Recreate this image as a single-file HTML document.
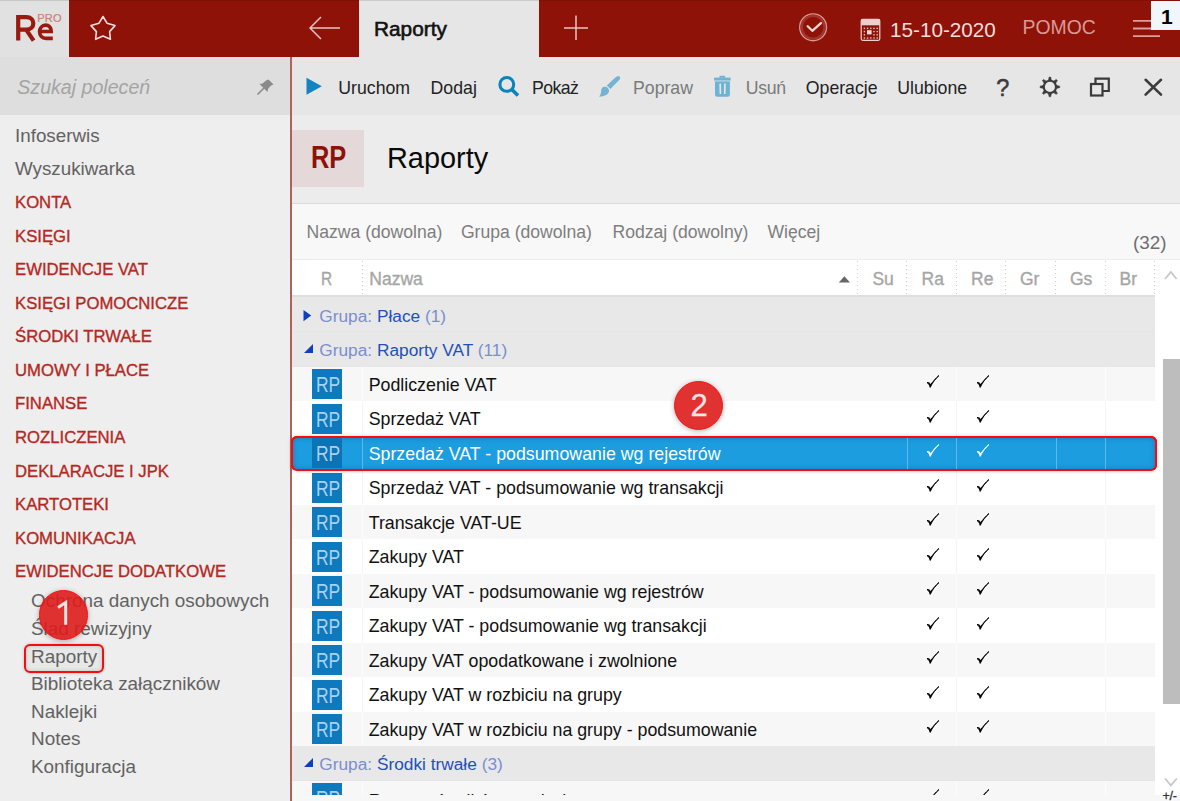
<!DOCTYPE html>
<html><head><meta charset="utf-8"><style>
html,body{margin:0;padding:0;}
body{width:1180px;height:801px;overflow:hidden;position:relative;font-family:"Liberation Sans",sans-serif;background:#eee;}
.b{position:absolute;}
.t{position:absolute;white-space:nowrap;}
</style></head><body>
<div class="b" style="left:0px;top:0px;width:1180px;height:801px;background:#eeeeee;"></div>
<div class="b" style="left:69px;top:0px;width:1111px;height:57px;background:#8e1207;"></div>
<div class="b" style="left:0px;top:0px;width:69px;height:57px;background:#e1e1e1;"></div>
<div class="b" style="left:359px;top:0px;width:180px;height:57px;background:#e6e6e6;"></div>
<div class="b" style="left:0px;top:0px;width:1180px;height:1px;background:rgba(0,0,0,0.11);"></div>
<div class="b" style="left:0px;top:57px;width:290px;height:58px;background:#dedede;"></div>
<div class="b" style="left:292px;top:57px;width:888px;height:58px;background:#e6e6e6;"></div>
<div class="b" style="left:292px;top:115px;width:888px;height:88px;background:#ececec;"></div>
<div class="b" style="left:292px;top:203px;width:888px;height:1px;background:#dadada;"></div>
<div class="b" style="left:292px;top:204px;width:888px;height:55px;background:#f8f8f8;"></div>
<div class="b" style="left:292px;top:259px;width:888px;height:1px;background:#ececec;"></div>
<div class="b" style="left:292px;top:260px;width:888px;height:35px;background:#ffffff;"></div>
<div class="b" style="left:292px;top:295px;width:863px;height:2px;background:#dedede;"></div>
<div class="b" style="left:1155px;top:294px;width:25px;height:507px;background:#ffffff;"></div>
<div class="b" style="left:290px;top:57px;width:2px;height:744px;background:#b0625a;"></div>
<svg class="b" style="left:10px;top:10px" width="50" height="34" viewBox="10 10 50 34"><path d="M18.2,40.6 V17.2 H26.3 C30.9,17.2 33.3,19.9 33.3,23.4 C33.3,26.9 30.9,29.6 26.3,29.6 H18.2 M26,29.4 L33.6,40.6" stroke="#9a1a10" stroke-width="4.2" fill="none"/><path d="M39.6,31.5 H51.2 C51.2,27.4 48.8,25.2 45.6,25.2 C42,25.2 39.6,28.2 39.6,31.8 C39.6,35.7 42.2,38.4 46,38.4 H52.8" stroke="#9a1a10" stroke-width="3.7" fill="none"/></svg>
<div class="t " style="left:37.3px;top:12.68px;font-size:11px;line-height:11px;color:#c98078;font-weight:normal;font-style:normal;letter-spacing:0.2px;-webkit-text-stroke:0.2px #c98078;">PRO</div>
<svg class="b" style="left:88px;top:14px" width="30" height="28" viewBox="88 14 30 28"><polygon points="103,16.5 107,23.2 115,25.6 109.6,31.6 110.4,39.3 103,36.1 95.6,39.3 96.4,31.6 91,25.6 99,23.2" fill="none" stroke="#f2dcdc" stroke-width="1.6" stroke-linejoin="round"/></svg>
<svg class="b" style="left:305px;top:12px" width="40" height="32" viewBox="305 12 40 32"><path d="M310,28 H340 M321,17 L310,28 L321,39" fill="none" stroke="#e8c4c0" stroke-width="1.5"/></svg>
<div class="t " style="left:374px;top:18.68px;font-size:20.8px;line-height:20.8px;color:#111;font-weight:normal;font-style:normal;-webkit-text-stroke:0.6px #111;">Raporty</div>
<svg class="b" style="left:560px;top:12px" width="32" height="32" viewBox="560 12 32 32"><path d="M576,15.5 V40 M564,28 H588" fill="none" stroke="#e8c4c0" stroke-width="1.5"/></svg>
<svg class="b" style="left:796px;top:10px" width="34" height="34" viewBox="796 10 34 34"><circle cx="813.1" cy="27.3" r="13.4" fill="none" stroke="#d69894" stroke-width="1.4"/><circle cx="813.1" cy="27.3" r="11.4" fill="none" stroke="#a2352e" stroke-width="2.2"/><path d="M807.7,26.3 L812.3,30.8 L820.9,23.1" fill="none" stroke="#f0d6d4" stroke-width="2.3" stroke-linecap="round" stroke-linejoin="round"/></svg>
<svg class="b" style="left:858px;top:17px" width="26" height="26" viewBox="858 17 26 26"><rect x="861.2" y="19.3" width="18.6" height="21" rx="1.5" fill="none" stroke="#ecd0d0" stroke-width="1.2"/><rect x="861.2" y="19.3" width="18.6" height="6" fill="#ecd0d0"/><rect x="863.7" y="27.7" width="1.4" height="1.4" fill="#e8c4c4"/><rect x="866.9000000000001" y="27.7" width="1.4" height="1.4" fill="#e8c4c4"/><rect x="870.1" y="27.7" width="1.4" height="1.4" fill="#e8c4c4"/><rect x="873.3000000000001" y="27.7" width="1.4" height="1.4" fill="#e8c4c4"/><rect x="876.5" y="27.7" width="1.4" height="1.4" fill="#e8c4c4"/><rect x="863.7" y="30.9" width="1.4" height="1.4" fill="#e8c4c4"/><rect x="873.3000000000001" y="30.9" width="1.4" height="1.4" fill="#e8c4c4"/><rect x="876.5" y="30.9" width="1.4" height="1.4" fill="#e8c4c4"/><rect x="863.7" y="34.1" width="1.4" height="1.4" fill="#e8c4c4"/><rect x="873.3000000000001" y="34.1" width="1.4" height="1.4" fill="#e8c4c4"/><rect x="876.5" y="34.1" width="1.4" height="1.4" fill="#e8c4c4"/><rect x="863.7" y="37.3" width="1.4" height="1.4" fill="#e8c4c4"/><rect x="866.9000000000001" y="37.3" width="1.4" height="1.4" fill="#e8c4c4"/><rect x="870.1" y="37.3" width="1.4" height="1.4" fill="#e8c4c4"/><rect x="873.3000000000001" y="37.3" width="1.4" height="1.4" fill="#e8c4c4"/><rect x="876.5" y="37.3" width="1.4" height="1.4" fill="#e8c4c4"/><rect x="867" y="30.2" width="4.6" height="4.2" fill="#f2dcdc"/></svg>
<div class="t " style="left:890px;top:19.01px;font-size:21px;line-height:21px;color:#f3dede;font-weight:normal;font-style:normal;transform:scaleX(0.985);transform-origin:0 0;">15-10-2020</div>
<div class="t " style="left:1022.5px;top:17.77px;font-size:19.4px;line-height:19.4px;color:#d99a96;font-weight:normal;font-style:normal;">POMOC</div>
<svg class="b" style="left:1130px;top:15px" width="34" height="26" viewBox="1130 15 34 26"><path d="M1133,20.8 H1160 M1133,28.5 H1160 M1133,36.1 H1160" fill="none" stroke="#d9a09c" stroke-width="1.8"/></svg>
<div class="b" style="left:1150.5px;top:0.5px;width:29.5px;height:29.5px;background:#f0f6fa;"></div>
<div class="t " style="left:1161px;top:5.51px;font-size:21px;line-height:21px;color:#000;font-weight:bold;font-style:normal;">1</div>
<div class="t " style="left:17.3px;top:77.80px;font-size:19.6px;line-height:19.6px;color:#a4a4a4;font-weight:normal;font-style:italic;">Szukaj poleceń</div>
<svg class="b" style="left:254px;top:76px" width="24" height="22" viewBox="254 76 24 22"><path d="M257.5,94.5 L264,88" stroke="#8a8a8a" stroke-width="1.6"/><path d="M268.5,79.5 L273.5,84.5 L271,85.5 L268,89 L267.5,92 L259.5,84 L262.5,83.5 L266,80.5 Z" fill="#8a8a8a"/></svg>
<div class="t " style="left:15px;top:126.88px;font-size:18.8px;line-height:18.8px;color:#626262;font-weight:normal;font-style:normal;">Infoserwis</div>
<div class="t " style="left:15px;top:160.18px;font-size:18.8px;line-height:18.8px;color:#626262;font-weight:normal;font-style:normal;">Wyszukiwarka</div>
<div class="t " style="left:15px;top:194.96px;font-size:16.7px;line-height:16.7px;color:#b5281f;font-weight:normal;font-style:normal;-webkit-text-stroke:0.35px #b5281f;">KONTA</div>
<div class="t " style="left:15px;top:228.53px;font-size:16.7px;line-height:16.7px;color:#b5281f;font-weight:normal;font-style:normal;-webkit-text-stroke:0.35px #b5281f;">KSIĘGI</div>
<div class="t " style="left:15px;top:262.10px;font-size:16.7px;line-height:16.7px;color:#b5281f;font-weight:normal;font-style:normal;-webkit-text-stroke:0.35px #b5281f;">EWIDENCJE VAT</div>
<div class="t " style="left:15px;top:295.67px;font-size:16.7px;line-height:16.7px;color:#b5281f;font-weight:normal;font-style:normal;-webkit-text-stroke:0.35px #b5281f;">KSIĘGI POMOCNICZE</div>
<div class="t " style="left:15px;top:329.24px;font-size:16.7px;line-height:16.7px;color:#b5281f;font-weight:normal;font-style:normal;-webkit-text-stroke:0.35px #b5281f;">ŚRODKI TRWAŁE</div>
<div class="t " style="left:15px;top:362.81px;font-size:16.7px;line-height:16.7px;color:#b5281f;font-weight:normal;font-style:normal;-webkit-text-stroke:0.35px #b5281f;">UMOWY I PŁACE</div>
<div class="t " style="left:15px;top:396.38px;font-size:16.7px;line-height:16.7px;color:#b5281f;font-weight:normal;font-style:normal;-webkit-text-stroke:0.35px #b5281f;">FINANSE</div>
<div class="t " style="left:15px;top:429.95px;font-size:16.7px;line-height:16.7px;color:#b5281f;font-weight:normal;font-style:normal;-webkit-text-stroke:0.35px #b5281f;">ROZLICZENIA</div>
<div class="t " style="left:15px;top:463.52px;font-size:16.7px;line-height:16.7px;color:#b5281f;font-weight:normal;font-style:normal;-webkit-text-stroke:0.35px #b5281f;">DEKLARACJE I JPK</div>
<div class="t " style="left:15px;top:497.09px;font-size:16.7px;line-height:16.7px;color:#b5281f;font-weight:normal;font-style:normal;-webkit-text-stroke:0.35px #b5281f;">KARTOTEKI</div>
<div class="t " style="left:15px;top:530.66px;font-size:16.7px;line-height:16.7px;color:#b5281f;font-weight:normal;font-style:normal;-webkit-text-stroke:0.35px #b5281f;">KOMUNIKACJA</div>
<div class="t " style="left:15px;top:564.23px;font-size:16.7px;line-height:16.7px;color:#b5281f;font-weight:normal;font-style:normal;-webkit-text-stroke:0.35px #b5281f;">EWIDENCJE DODATKOWE</div>
<div class="b" style="left:23.7px;top:643.5px;width:76.3px;height:25px;border:2px solid #f50c0c;border-radius:6px;background:#e8e8e8;box-shadow:0 0 3px rgba(0,0,0,0.22), inset 0 0 4px rgba(0,0,0,0.18)"></div>
<div class="t " style="left:31px;top:592.39px;font-size:18.9px;line-height:18.9px;color:#626262;font-weight:normal;font-style:normal;">Ochrona danych osobowych</div>
<div class="t " style="left:31px;top:619.99px;font-size:18.9px;line-height:18.9px;color:#626262;font-weight:normal;font-style:normal;">Ślad rewizyjny</div>
<div class="t " style="left:31px;top:647.59px;font-size:18.9px;line-height:18.9px;color:#626262;font-weight:normal;font-style:normal;">Raporty</div>
<div class="t " style="left:31px;top:675.19px;font-size:18.9px;line-height:18.9px;color:#626262;font-weight:normal;font-style:normal;">Biblioteka załączników</div>
<div class="t " style="left:31px;top:702.79px;font-size:18.9px;line-height:18.9px;color:#626262;font-weight:normal;font-style:normal;">Naklejki</div>
<div class="t " style="left:31px;top:730.39px;font-size:18.9px;line-height:18.9px;color:#626262;font-weight:normal;font-style:normal;">Notes</div>
<div class="t " style="left:31px;top:757.99px;font-size:18.9px;line-height:18.9px;color:#626262;font-weight:normal;font-style:normal;">Konfiguracja</div>
<svg class="b" style="left:304px;top:75px" width="20" height="22" viewBox="304 75 20 22"><polygon points="306.5,77.8 321.8,86.3 306.5,94.8" fill="#1284c0"/></svg>
<div class="t " style="left:338.3px;top:79.61px;font-size:17.7px;line-height:17.7px;color:#222222;font-weight:normal;font-style:normal;">Uruchom</div>
<div class="t " style="left:430.6px;top:79.61px;font-size:17.7px;line-height:17.7px;color:#222222;font-weight:normal;font-style:normal;">Dodaj</div>
<svg class="b" style="left:494px;top:72px" width="30" height="28" viewBox="494 72 30 28"><circle cx="506.8" cy="84.4" r="6.9" fill="none" stroke="#0a84bc" stroke-width="3.1"/><path d="M511.8,89.4 L518,95.6" stroke="#0a84bc" stroke-width="3.6"/></svg>
<div class="t " style="left:532px;top:79.61px;font-size:17.7px;line-height:17.7px;color:#222222;font-weight:normal;font-style:normal;letter-spacing:-0.6px;">Pokaż</div>
<svg class="b" style="left:594px;top:72px" width="32" height="28" viewBox="594 72 32 28"><path d="M619.6,76.6 C620.6,77.6 620.2,79 619.2,80 L610.4,89 L606.8,85.5 L615.4,77.6 C617,76.3 618.6,75.8 619.6,76.6 Z" fill="#74b4d2"/><path d="M604.5,86.8 C607.5,86.6 609.4,89 609,91.5 C608.5,94.5 604,96.5 599.2,96.7 C600.5,95 601,93 601.2,90.5 C601.3,88.3 602.6,86.9 604.5,86.8 Z" fill="#74b4d2"/></svg>
<div class="t " style="left:633px;top:79.61px;font-size:17.7px;line-height:17.7px;color:#7a7a7a;font-weight:normal;font-style:normal;">Popraw</div>
<svg class="b" style="left:708px;top:72px" width="28" height="28" viewBox="708 72 28 28"><rect x="714.1" y="77.6" width="16.5" height="3" fill="#6db3d3"/><rect x="719.5" y="75.8" width="5.6" height="2" fill="#6db3d3"/><rect x="714.5" y="80.6" width="15.6" height="0.9" fill="#a8cfe0"/><path d="M715,81.5 H729.9 V94.6 Q729.9,96.8 727.7,96.8 H717.2 Q715,96.8 715,94.6 Z" fill="#6db3d3"/><path d="M719.3,83.6 H721 L721.2,94 H719.6 Z M724.1,83.6 H725.8 L725.5,94 H723.9 Z" fill="#e6e6e6"/></svg>
<div class="t " style="left:745.8px;top:79.61px;font-size:17.7px;line-height:17.7px;color:#7a7a7a;font-weight:normal;font-style:normal;letter-spacing:-0.3px;">Usuń</div>
<div class="t " style="left:805.8px;top:79.61px;font-size:17.7px;line-height:17.7px;color:#222222;font-weight:normal;font-style:normal;">Operacje</div>
<div class="t " style="left:897.3px;top:79.61px;font-size:17.7px;line-height:17.7px;color:#222222;font-weight:normal;font-style:normal;">Ulubione</div>
<div class="t " style="left:996.3px;top:76.90px;font-size:23.5px;line-height:23.5px;color:#3c3c3c;font-weight:normal;font-style:normal;-webkit-text-stroke:0.5px #3c3c3c;">?</div>
<svg class="b" style="left:1036px;top:73px" width="28" height="28" viewBox="1036 73 28 28"><path d="M1051.50,80.90 L1050.65,77.10 L1049.15,77.10 L1048.30,80.90 Z M1055.27,83.79 L1057.36,80.50 L1056.30,79.44 L1053.01,81.53 Z M1055.90,88.50 L1059.70,87.65 L1059.70,86.15 L1055.90,85.30 Z M1053.01,92.27 L1056.30,94.36 L1057.36,93.30 L1055.27,90.01 Z M1048.30,92.90 L1049.15,96.70 L1050.65,96.70 L1051.50,92.90 Z M1044.53,90.01 L1042.44,93.30 L1043.50,94.36 L1046.79,92.27 Z M1043.90,85.30 L1040.10,86.15 L1040.10,87.65 L1043.90,88.50 Z M1046.79,81.53 L1043.50,79.44 L1042.44,80.50 L1044.53,83.79 Z" fill="#3c3c3c" stroke="#3c3c3c" stroke-width="0.6" stroke-linejoin="round"/><circle cx="1049.9" cy="86.9" r="6.1" fill="none" stroke="#3c3c3c" stroke-width="2.1"/></svg>
<svg class="b" style="left:1086px;top:74px" width="28" height="26" viewBox="1086 74 28 26"><rect x="1091" y="84" width="11.5" height="11.5" fill="none" stroke="#3a3a3a" stroke-width="2.2"/><path d="M1095.5,84 V78.6 H1108.8 V91 H1102.5" fill="none" stroke="#3a3a3a" stroke-width="2.2"/></svg>
<svg class="b" style="left:1141px;top:75px" width="25" height="24" viewBox="1141 75 25 24"><path d="M1145.6,79.8 L1161,94.6 M1161,79.8 L1145.6,94.6" stroke="#3c3c3c" stroke-width="2.6" stroke-linecap="round"/></svg>
<div class="b" style="left:292px;top:130px;width:72px;height:57px;background:#e4d8d8;"></div>
<div class="t " style="left:311.4px;top:142.34px;font-size:31px;line-height:31px;color:#8e1207;font-weight:bold;font-style:normal;transform:scaleX(0.82);transform-origin:0 0;">RP</div>
<div class="t " style="left:387px;top:144.12px;font-size:28.9px;line-height:28.9px;color:#0a0a0a;font-weight:normal;font-style:normal;">Raporty</div>
<div class="t " style="left:306.5px;top:223.59px;font-size:17.6px;line-height:17.6px;color:#7e7e7e;font-weight:normal;font-style:normal;">Nazwa (dowolna)</div>
<div class="t " style="left:460.9px;top:223.59px;font-size:17.6px;line-height:17.6px;color:#7e7e7e;font-weight:normal;font-style:normal;">Grupa (dowolna)</div>
<div class="t " style="left:612.5px;top:223.59px;font-size:17.6px;line-height:17.6px;color:#7e7e7e;font-weight:normal;font-style:normal;">Rodzaj (dowolny)</div>
<div class="t " style="left:767.4px;top:223.59px;font-size:17.6px;line-height:17.6px;color:#7e7e7e;font-weight:normal;font-style:normal;">Więcej</div>
<div class="t " style="right:13.5px;top:234.09px;font-size:18.9px;line-height:18.9px;color:#6e6e6e;font-weight:normal;font-style:normal;">(32)</div>
<div class="t " style="left:321.3px;top:270.78px;font-size:17.5px;line-height:17.5px;color:#a6a6a6;font-weight:normal;font-style:normal;transform:scaleX(0.88);transform-origin:0 0;-webkit-text-stroke:0.35px #a6a6a6;">R</div>
<div class="t " style="left:369.3px;top:270.78px;font-size:17.5px;line-height:17.5px;color:#a6a6a6;font-weight:normal;font-style:normal;-webkit-text-stroke:0.35px #a6a6a6;">Nazwa</div>
<svg class="b" style="left:836px;top:274px" width="16" height="10" viewBox="836 274 16 10"><polygon points="838.8,282.6 844.4,276.3 850,282.6" fill="#666"/></svg>
<div class="b" style="left:361.5px;top:261px;width:1px;height:36px;background:repeating-linear-gradient(to bottom,#cdcdcd 0px,#cdcdcd 1.5px,transparent 1.5px,transparent 4px)"></div>
<div class="b" style="left:857.1px;top:261px;width:1px;height:36px;background:repeating-linear-gradient(to bottom,#cdcdcd 0px,#cdcdcd 1.5px,transparent 1.5px,transparent 4px)"></div>
<div class="b" style="left:906.3px;top:261px;width:1px;height:36px;background:repeating-linear-gradient(to bottom,#cdcdcd 0px,#cdcdcd 1.5px,transparent 1.5px,transparent 4px)"></div>
<div class="b" style="left:955.8px;top:261px;width:1px;height:36px;background:repeating-linear-gradient(to bottom,#cdcdcd 0px,#cdcdcd 1.5px,transparent 1.5px,transparent 4px)"></div>
<div class="b" style="left:1005.3px;top:261px;width:1px;height:36px;background:repeating-linear-gradient(to bottom,#cdcdcd 0px,#cdcdcd 1.5px,transparent 1.5px,transparent 4px)"></div>
<div class="b" style="left:1055.0px;top:261px;width:1px;height:36px;background:repeating-linear-gradient(to bottom,#cdcdcd 0px,#cdcdcd 1.5px,transparent 1.5px,transparent 4px)"></div>
<div class="b" style="left:1104.5px;top:261px;width:1px;height:36px;background:repeating-linear-gradient(to bottom,#cdcdcd 0px,#cdcdcd 1.5px,transparent 1.5px,transparent 4px)"></div>
<div class="b" style="left:1154.3px;top:261px;width:1px;height:36px;background:repeating-linear-gradient(to bottom,#cdcdcd 0px,#cdcdcd 1.5px,transparent 1.5px,transparent 4px)"></div>
<div class="t " style="left:872.4px;top:270.78px;font-size:17.5px;line-height:17.5px;color:#a6a6a6;font-weight:normal;font-style:normal;-webkit-text-stroke:0.35px #a6a6a6;">Su</div>
<div class="t " style="left:921.5px;top:270.78px;font-size:17.5px;line-height:17.5px;color:#a6a6a6;font-weight:normal;font-style:normal;-webkit-text-stroke:0.35px #a6a6a6;">Ra</div>
<div class="t " style="left:971px;top:270.78px;font-size:17.5px;line-height:17.5px;color:#a6a6a6;font-weight:normal;font-style:normal;-webkit-text-stroke:0.35px #a6a6a6;">Re</div>
<div class="t " style="left:1020px;top:270.78px;font-size:17.5px;line-height:17.5px;color:#a6a6a6;font-weight:normal;font-style:normal;-webkit-text-stroke:0.35px #a6a6a6;">Gr</div>
<div class="t " style="left:1070px;top:270.78px;font-size:17.5px;line-height:17.5px;color:#a6a6a6;font-weight:normal;font-style:normal;-webkit-text-stroke:0.35px #a6a6a6;">Gs</div>
<div class="t " style="left:1119.5px;top:270.78px;font-size:17.5px;line-height:17.5px;color:#a6a6a6;font-weight:normal;font-style:normal;-webkit-text-stroke:0.35px #a6a6a6;">Br</div>
<svg class="b" style="left:1162px;top:268px" width="18" height="14" viewBox="1162 268 18 14"><path d="M1165,279 L1170.8,272 L1176.6,279" fill="none" stroke="#c8c8c8" stroke-width="1.8"/></svg>
<div class="b" style="left:292px;top:297px;width:863px;height:34.5px;background:#e8e8e8;"></div>
<div class="b" style="left:292px;top:331.0px;width:863px;height:1px;background:#e5e5e5;"></div>
<svg class="b" style="left:300px;top:307px" width="14" height="16" viewBox="0 0 14 16"><polygon points="3.5,3 11.2,8.6 3.5,14.2" fill="#0c40c0"/></svg>
<div class="t" style="left:319.3px;top:307.55px;font-size:17.3px;line-height:17.3px;color:#7a8ed0">Grupa: <span style="color:#2250b8">Płace</span> (1)</div>
<div class="b" style="left:292px;top:331.5px;width:863px;height:35px;background:#e8e8e8;"></div>
<div class="b" style="left:292px;top:366.0px;width:863px;height:1px;background:#e5e5e5;"></div>
<svg class="b" style="left:300px;top:341.5px" width="14" height="14" viewBox="0 0 14 14"><polygon points="4,10.9 13,2 13,10.9" fill="#0c40c0"/></svg>
<div class="t" style="left:319.3px;top:342.05px;font-size:17.3px;line-height:17.3px;color:#7a8ed0">Grupa: <span style="color:#2250b8">Raporty VAT</span> (11)</div>
<div class="b" style="left:292px;top:366.5px;width:863px;height:34.5px;background:#f7f7f7;"></div>
<div class="b" style="left:362px;top:366.5px;width:1px;height:34.5px;background:#fcfcfc;"></div>
<div class="b" style="left:956.3px;top:366.5px;width:1px;height:34.5px;background:#fcfcfc;"></div>
<div class="b" style="left:1105px;top:366.5px;width:1px;height:34.5px;background:#fcfcfc;"></div>
<div class="b" style="left:312px;top:369.2px;width:30px;height:30px;background:#0f79be"></div>
<div class="t" style="left:315.5px;top:374.14px;font-size:21.8px;line-height:21.8px;color:#a6d2ef;transform:scaleX(0.8);transform-origin:0 0">RP</div>
<div class="t " style="left:368.7px;top:376.72px;font-size:17.8px;line-height:17.8px;color:#111111;font-weight:normal;font-style:normal;">Podliczenie VAT</div>
<svg class="b" style="left:925.7px;top:374.1px" width="14" height="15" viewBox="0 0 14 15"><path d="M1,8.5 C2.5,9.5 3.5,11 4.2,13.4 C6.5,8.5 9.5,4.5 13,1.5 C9.5,4.5 6.8,8 4.6,10.5 C4,9.3 2.8,8.3 1,8.5 Z" fill="#000000" stroke="#000000" stroke-width="0.95" stroke-linejoin="round"/></svg>
<svg class="b" style="left:975.7px;top:374.1px" width="14" height="15" viewBox="0 0 14 15"><path d="M1,8.5 C2.5,9.5 3.5,11 4.2,13.4 C6.5,8.5 9.5,4.5 13,1.5 C9.5,4.5 6.8,8 4.6,10.5 C4,9.3 2.8,8.3 1,8.5 Z" fill="#000000" stroke="#000000" stroke-width="0.95" stroke-linejoin="round"/></svg>
<div class="b" style="left:292px;top:401.0px;width:863px;height:34.5px;background:#ffffff;"></div>
<div class="b" style="left:362px;top:401.0px;width:1px;height:34.5px;background:#f5f5f5;"></div>
<div class="b" style="left:956.3px;top:401.0px;width:1px;height:34.5px;background:#f5f5f5;"></div>
<div class="b" style="left:1105px;top:401.0px;width:1px;height:34.5px;background:#f5f5f5;"></div>
<div class="b" style="left:312px;top:403.7px;width:30px;height:30px;background:#0f79be"></div>
<div class="t" style="left:315.5px;top:408.64px;font-size:21.8px;line-height:21.8px;color:#a6d2ef;transform:scaleX(0.8);transform-origin:0 0">RP</div>
<div class="t " style="left:368.7px;top:411.22px;font-size:17.8px;line-height:17.8px;color:#111111;font-weight:normal;font-style:normal;">Sprzedaż VAT</div>
<svg class="b" style="left:925.7px;top:408.6px" width="14" height="15" viewBox="0 0 14 15"><path d="M1,8.5 C2.5,9.5 3.5,11 4.2,13.4 C6.5,8.5 9.5,4.5 13,1.5 C9.5,4.5 6.8,8 4.6,10.5 C4,9.3 2.8,8.3 1,8.5 Z" fill="#000000" stroke="#000000" stroke-width="0.95" stroke-linejoin="round"/></svg>
<svg class="b" style="left:975.7px;top:408.6px" width="14" height="15" viewBox="0 0 14 15"><path d="M1,8.5 C2.5,9.5 3.5,11 4.2,13.4 C6.5,8.5 9.5,4.5 13,1.5 C9.5,4.5 6.8,8 4.6,10.5 C4,9.3 2.8,8.3 1,8.5 Z" fill="#000000" stroke="#000000" stroke-width="0.95" stroke-linejoin="round"/></svg>
<div class="b" style="left:292px;top:435.5px;width:863px;height:34.5px;background:#f7f7f7;"></div>
<div class="b" style="left:290.6px;top:436px;width:862.6px;height:31px;border:2px solid #fa0a0a;border-radius:6px;background:#1c9ddf;box-shadow:inset 0 0 5px rgba(0,60,120,0.35)"></div>
<div class="b" style="left:362px;top:437.0px;width:1px;height:31.5px;background:#5ab9ea;"></div>
<div class="b" style="left:907px;top:437.0px;width:1px;height:31.5px;background:#5ab9ea;"></div>
<div class="b" style="left:956.3px;top:437.0px;width:1px;height:31.5px;background:#5ab9ea;"></div>
<div class="b" style="left:1055.5px;top:437.0px;width:1px;height:31.5px;background:#5ab9ea;"></div>
<div class="b" style="left:1105px;top:437.0px;width:1px;height:31.5px;background:#5ab9ea;"></div>
<div class="b" style="left:312px;top:438.2px;width:30px;height:30px;background:#0c73b5"></div>
<div class="t" style="left:315.5px;top:443.14px;font-size:21.8px;line-height:21.8px;color:#a6d2ef;transform:scaleX(0.8);transform-origin:0 0">RP</div>
<div class="t " style="left:368.7px;top:445.72px;font-size:17.8px;line-height:17.8px;color:#ffffff;font-weight:normal;font-style:normal;">Sprzedaż VAT - podsumowanie wg rejestrów</div>
<svg class="b" style="left:925.7px;top:443.1px" width="14" height="15" viewBox="0 0 14 15"><path d="M1,8.5 C2.5,9.5 3.5,11 4.2,13.4 C6.5,8.5 9.5,4.5 13,1.5 C9.5,4.5 6.8,8 4.6,10.5 C4,9.3 2.8,8.3 1,8.5 Z" fill="#ffffff" stroke="#ffffff" stroke-width="0.95" stroke-linejoin="round"/></svg>
<svg class="b" style="left:975.7px;top:443.1px" width="14" height="15" viewBox="0 0 14 15"><path d="M1,8.5 C2.5,9.5 3.5,11 4.2,13.4 C6.5,8.5 9.5,4.5 13,1.5 C9.5,4.5 6.8,8 4.6,10.5 C4,9.3 2.8,8.3 1,8.5 Z" fill="#ffffff" stroke="#ffffff" stroke-width="0.95" stroke-linejoin="round"/></svg>
<div class="b" style="left:292px;top:470.0px;width:863px;height:34.5px;background:#ffffff;"></div>
<div class="b" style="left:362px;top:470.0px;width:1px;height:34.5px;background:#f5f5f5;"></div>
<div class="b" style="left:956.3px;top:470.0px;width:1px;height:34.5px;background:#f5f5f5;"></div>
<div class="b" style="left:1105px;top:470.0px;width:1px;height:34.5px;background:#f5f5f5;"></div>
<div class="b" style="left:312px;top:472.7px;width:30px;height:30px;background:#0f79be"></div>
<div class="t" style="left:315.5px;top:477.64px;font-size:21.8px;line-height:21.8px;color:#a6d2ef;transform:scaleX(0.8);transform-origin:0 0">RP</div>
<div class="t " style="left:368.7px;top:480.22px;font-size:17.8px;line-height:17.8px;color:#111111;font-weight:normal;font-style:normal;">Sprzedaż VAT - podsumowanie wg transakcji</div>
<svg class="b" style="left:925.7px;top:477.6px" width="14" height="15" viewBox="0 0 14 15"><path d="M1,8.5 C2.5,9.5 3.5,11 4.2,13.4 C6.5,8.5 9.5,4.5 13,1.5 C9.5,4.5 6.8,8 4.6,10.5 C4,9.3 2.8,8.3 1,8.5 Z" fill="#000000" stroke="#000000" stroke-width="0.95" stroke-linejoin="round"/></svg>
<svg class="b" style="left:975.7px;top:477.6px" width="14" height="15" viewBox="0 0 14 15"><path d="M1,8.5 C2.5,9.5 3.5,11 4.2,13.4 C6.5,8.5 9.5,4.5 13,1.5 C9.5,4.5 6.8,8 4.6,10.5 C4,9.3 2.8,8.3 1,8.5 Z" fill="#000000" stroke="#000000" stroke-width="0.95" stroke-linejoin="round"/></svg>
<div class="b" style="left:292px;top:504.5px;width:863px;height:34.5px;background:#f7f7f7;"></div>
<div class="b" style="left:362px;top:504.5px;width:1px;height:34.5px;background:#fcfcfc;"></div>
<div class="b" style="left:956.3px;top:504.5px;width:1px;height:34.5px;background:#fcfcfc;"></div>
<div class="b" style="left:1105px;top:504.5px;width:1px;height:34.5px;background:#fcfcfc;"></div>
<div class="b" style="left:312px;top:507.2px;width:30px;height:30px;background:#0f79be"></div>
<div class="t" style="left:315.5px;top:512.14px;font-size:21.8px;line-height:21.8px;color:#a6d2ef;transform:scaleX(0.8);transform-origin:0 0">RP</div>
<div class="t " style="left:368.7px;top:514.72px;font-size:17.8px;line-height:17.8px;color:#111111;font-weight:normal;font-style:normal;">Transakcje VAT-UE</div>
<svg class="b" style="left:925.7px;top:512.1px" width="14" height="15" viewBox="0 0 14 15"><path d="M1,8.5 C2.5,9.5 3.5,11 4.2,13.4 C6.5,8.5 9.5,4.5 13,1.5 C9.5,4.5 6.8,8 4.6,10.5 C4,9.3 2.8,8.3 1,8.5 Z" fill="#000000" stroke="#000000" stroke-width="0.95" stroke-linejoin="round"/></svg>
<svg class="b" style="left:975.7px;top:512.1px" width="14" height="15" viewBox="0 0 14 15"><path d="M1,8.5 C2.5,9.5 3.5,11 4.2,13.4 C6.5,8.5 9.5,4.5 13,1.5 C9.5,4.5 6.8,8 4.6,10.5 C4,9.3 2.8,8.3 1,8.5 Z" fill="#000000" stroke="#000000" stroke-width="0.95" stroke-linejoin="round"/></svg>
<div class="b" style="left:292px;top:539.0px;width:863px;height:34.5px;background:#ffffff;"></div>
<div class="b" style="left:362px;top:539.0px;width:1px;height:34.5px;background:#f5f5f5;"></div>
<div class="b" style="left:956.3px;top:539.0px;width:1px;height:34.5px;background:#f5f5f5;"></div>
<div class="b" style="left:1105px;top:539.0px;width:1px;height:34.5px;background:#f5f5f5;"></div>
<div class="b" style="left:312px;top:541.7px;width:30px;height:30px;background:#0f79be"></div>
<div class="t" style="left:315.5px;top:546.64px;font-size:21.8px;line-height:21.8px;color:#a6d2ef;transform:scaleX(0.8);transform-origin:0 0">RP</div>
<div class="t " style="left:368.7px;top:549.22px;font-size:17.8px;line-height:17.8px;color:#111111;font-weight:normal;font-style:normal;">Zakupy VAT</div>
<svg class="b" style="left:925.7px;top:546.6px" width="14" height="15" viewBox="0 0 14 15"><path d="M1,8.5 C2.5,9.5 3.5,11 4.2,13.4 C6.5,8.5 9.5,4.5 13,1.5 C9.5,4.5 6.8,8 4.6,10.5 C4,9.3 2.8,8.3 1,8.5 Z" fill="#000000" stroke="#000000" stroke-width="0.95" stroke-linejoin="round"/></svg>
<svg class="b" style="left:975.7px;top:546.6px" width="14" height="15" viewBox="0 0 14 15"><path d="M1,8.5 C2.5,9.5 3.5,11 4.2,13.4 C6.5,8.5 9.5,4.5 13,1.5 C9.5,4.5 6.8,8 4.6,10.5 C4,9.3 2.8,8.3 1,8.5 Z" fill="#000000" stroke="#000000" stroke-width="0.95" stroke-linejoin="round"/></svg>
<div class="b" style="left:292px;top:573.5px;width:863px;height:34.5px;background:#f7f7f7;"></div>
<div class="b" style="left:362px;top:573.5px;width:1px;height:34.5px;background:#fcfcfc;"></div>
<div class="b" style="left:956.3px;top:573.5px;width:1px;height:34.5px;background:#fcfcfc;"></div>
<div class="b" style="left:1105px;top:573.5px;width:1px;height:34.5px;background:#fcfcfc;"></div>
<div class="b" style="left:312px;top:576.2px;width:30px;height:30px;background:#0f79be"></div>
<div class="t" style="left:315.5px;top:581.14px;font-size:21.8px;line-height:21.8px;color:#a6d2ef;transform:scaleX(0.8);transform-origin:0 0">RP</div>
<div class="t " style="left:368.7px;top:583.72px;font-size:17.8px;line-height:17.8px;color:#111111;font-weight:normal;font-style:normal;">Zakupy VAT - podsumowanie wg rejestrów</div>
<svg class="b" style="left:925.7px;top:581.1px" width="14" height="15" viewBox="0 0 14 15"><path d="M1,8.5 C2.5,9.5 3.5,11 4.2,13.4 C6.5,8.5 9.5,4.5 13,1.5 C9.5,4.5 6.8,8 4.6,10.5 C4,9.3 2.8,8.3 1,8.5 Z" fill="#000000" stroke="#000000" stroke-width="0.95" stroke-linejoin="round"/></svg>
<svg class="b" style="left:975.7px;top:581.1px" width="14" height="15" viewBox="0 0 14 15"><path d="M1,8.5 C2.5,9.5 3.5,11 4.2,13.4 C6.5,8.5 9.5,4.5 13,1.5 C9.5,4.5 6.8,8 4.6,10.5 C4,9.3 2.8,8.3 1,8.5 Z" fill="#000000" stroke="#000000" stroke-width="0.95" stroke-linejoin="round"/></svg>
<div class="b" style="left:292px;top:608.0px;width:863px;height:34.5px;background:#ffffff;"></div>
<div class="b" style="left:362px;top:608.0px;width:1px;height:34.5px;background:#f5f5f5;"></div>
<div class="b" style="left:956.3px;top:608.0px;width:1px;height:34.5px;background:#f5f5f5;"></div>
<div class="b" style="left:1105px;top:608.0px;width:1px;height:34.5px;background:#f5f5f5;"></div>
<div class="b" style="left:312px;top:610.7px;width:30px;height:30px;background:#0f79be"></div>
<div class="t" style="left:315.5px;top:615.64px;font-size:21.8px;line-height:21.8px;color:#a6d2ef;transform:scaleX(0.8);transform-origin:0 0">RP</div>
<div class="t " style="left:368.7px;top:618.22px;font-size:17.8px;line-height:17.8px;color:#111111;font-weight:normal;font-style:normal;">Zakupy VAT - podsumowanie wg transakcji</div>
<svg class="b" style="left:925.7px;top:615.6px" width="14" height="15" viewBox="0 0 14 15"><path d="M1,8.5 C2.5,9.5 3.5,11 4.2,13.4 C6.5,8.5 9.5,4.5 13,1.5 C9.5,4.5 6.8,8 4.6,10.5 C4,9.3 2.8,8.3 1,8.5 Z" fill="#000000" stroke="#000000" stroke-width="0.95" stroke-linejoin="round"/></svg>
<svg class="b" style="left:975.7px;top:615.6px" width="14" height="15" viewBox="0 0 14 15"><path d="M1,8.5 C2.5,9.5 3.5,11 4.2,13.4 C6.5,8.5 9.5,4.5 13,1.5 C9.5,4.5 6.8,8 4.6,10.5 C4,9.3 2.8,8.3 1,8.5 Z" fill="#000000" stroke="#000000" stroke-width="0.95" stroke-linejoin="round"/></svg>
<div class="b" style="left:292px;top:642.5px;width:863px;height:34.5px;background:#f7f7f7;"></div>
<div class="b" style="left:362px;top:642.5px;width:1px;height:34.5px;background:#fcfcfc;"></div>
<div class="b" style="left:956.3px;top:642.5px;width:1px;height:34.5px;background:#fcfcfc;"></div>
<div class="b" style="left:1105px;top:642.5px;width:1px;height:34.5px;background:#fcfcfc;"></div>
<div class="b" style="left:312px;top:645.2px;width:30px;height:30px;background:#0f79be"></div>
<div class="t" style="left:315.5px;top:650.14px;font-size:21.8px;line-height:21.8px;color:#a6d2ef;transform:scaleX(0.8);transform-origin:0 0">RP</div>
<div class="t " style="left:368.7px;top:652.72px;font-size:17.8px;line-height:17.8px;color:#111111;font-weight:normal;font-style:normal;">Zakupy VAT opodatkowane i zwolnione</div>
<svg class="b" style="left:925.7px;top:650.1px" width="14" height="15" viewBox="0 0 14 15"><path d="M1,8.5 C2.5,9.5 3.5,11 4.2,13.4 C6.5,8.5 9.5,4.5 13,1.5 C9.5,4.5 6.8,8 4.6,10.5 C4,9.3 2.8,8.3 1,8.5 Z" fill="#000000" stroke="#000000" stroke-width="0.95" stroke-linejoin="round"/></svg>
<svg class="b" style="left:975.7px;top:650.1px" width="14" height="15" viewBox="0 0 14 15"><path d="M1,8.5 C2.5,9.5 3.5,11 4.2,13.4 C6.5,8.5 9.5,4.5 13,1.5 C9.5,4.5 6.8,8 4.6,10.5 C4,9.3 2.8,8.3 1,8.5 Z" fill="#000000" stroke="#000000" stroke-width="0.95" stroke-linejoin="round"/></svg>
<div class="b" style="left:292px;top:677.0px;width:863px;height:34.5px;background:#ffffff;"></div>
<div class="b" style="left:362px;top:677.0px;width:1px;height:34.5px;background:#f5f5f5;"></div>
<div class="b" style="left:956.3px;top:677.0px;width:1px;height:34.5px;background:#f5f5f5;"></div>
<div class="b" style="left:1105px;top:677.0px;width:1px;height:34.5px;background:#f5f5f5;"></div>
<div class="b" style="left:312px;top:679.7px;width:30px;height:30px;background:#0f79be"></div>
<div class="t" style="left:315.5px;top:684.64px;font-size:21.8px;line-height:21.8px;color:#a6d2ef;transform:scaleX(0.8);transform-origin:0 0">RP</div>
<div class="t " style="left:368.7px;top:687.22px;font-size:17.8px;line-height:17.8px;color:#111111;font-weight:normal;font-style:normal;">Zakupy VAT w rozbiciu na grupy</div>
<svg class="b" style="left:925.7px;top:684.6px" width="14" height="15" viewBox="0 0 14 15"><path d="M1,8.5 C2.5,9.5 3.5,11 4.2,13.4 C6.5,8.5 9.5,4.5 13,1.5 C9.5,4.5 6.8,8 4.6,10.5 C4,9.3 2.8,8.3 1,8.5 Z" fill="#000000" stroke="#000000" stroke-width="0.95" stroke-linejoin="round"/></svg>
<svg class="b" style="left:975.7px;top:684.6px" width="14" height="15" viewBox="0 0 14 15"><path d="M1,8.5 C2.5,9.5 3.5,11 4.2,13.4 C6.5,8.5 9.5,4.5 13,1.5 C9.5,4.5 6.8,8 4.6,10.5 C4,9.3 2.8,8.3 1,8.5 Z" fill="#000000" stroke="#000000" stroke-width="0.95" stroke-linejoin="round"/></svg>
<div class="b" style="left:292px;top:711.5px;width:863px;height:34.5px;background:#f7f7f7;"></div>
<div class="b" style="left:362px;top:711.5px;width:1px;height:34.5px;background:#fcfcfc;"></div>
<div class="b" style="left:956.3px;top:711.5px;width:1px;height:34.5px;background:#fcfcfc;"></div>
<div class="b" style="left:1105px;top:711.5px;width:1px;height:34.5px;background:#fcfcfc;"></div>
<div class="b" style="left:312px;top:714.2px;width:30px;height:30px;background:#0f79be"></div>
<div class="t" style="left:315.5px;top:719.14px;font-size:21.8px;line-height:21.8px;color:#a6d2ef;transform:scaleX(0.8);transform-origin:0 0">RP</div>
<div class="t " style="left:368.7px;top:721.72px;font-size:17.8px;line-height:17.8px;color:#111111;font-weight:normal;font-style:normal;">Zakupy VAT w rozbiciu na grupy - podsumowanie</div>
<svg class="b" style="left:925.7px;top:719.1px" width="14" height="15" viewBox="0 0 14 15"><path d="M1,8.5 C2.5,9.5 3.5,11 4.2,13.4 C6.5,8.5 9.5,4.5 13,1.5 C9.5,4.5 6.8,8 4.6,10.5 C4,9.3 2.8,8.3 1,8.5 Z" fill="#000000" stroke="#000000" stroke-width="0.95" stroke-linejoin="round"/></svg>
<svg class="b" style="left:975.7px;top:719.1px" width="14" height="15" viewBox="0 0 14 15"><path d="M1,8.5 C2.5,9.5 3.5,11 4.2,13.4 C6.5,8.5 9.5,4.5 13,1.5 C9.5,4.5 6.8,8 4.6,10.5 C4,9.3 2.8,8.3 1,8.5 Z" fill="#000000" stroke="#000000" stroke-width="0.95" stroke-linejoin="round"/></svg>
<div class="b" style="left:292px;top:745.5px;width:863px;height:34.5px;background:#e8e8e8;"></div>
<div class="b" style="left:292px;top:779.5px;width:863px;height:1px;background:#e5e5e5;"></div>
<svg class="b" style="left:300px;top:755.5px" width="14" height="14" viewBox="0 0 14 14"><polygon points="4,10.9 13,2 13,10.9" fill="#0c40c0"/></svg>
<div class="t" style="left:319.3px;top:756.05px;font-size:17.3px;line-height:17.3px;color:#7a8ed0">Grupa: <span style="color:#2250b8">Środki trwałe</span> (3)</div>
<div class="b" style="left:292px;top:780.5px;width:863px;height:34.5px;background:#f7f7f7;"></div>
<div class="b" style="left:362px;top:780.5px;width:1px;height:34.5px;background:#fcfcfc;"></div>
<div class="b" style="left:956.3px;top:780.5px;width:1px;height:34.5px;background:#fcfcfc;"></div>
<div class="b" style="left:1105px;top:780.5px;width:1px;height:34.5px;background:#fcfcfc;"></div>
<div class="b" style="left:312px;top:783.2px;width:30px;height:30px;background:#0f79be"></div>
<div class="t" style="left:315.5px;top:788.14px;font-size:21.8px;line-height:21.8px;color:#a6d2ef;transform:scaleX(0.8);transform-origin:0 0">RP</div>
<div class="t " style="left:368.7px;top:792.72px;font-size:17.8px;line-height:17.8px;color:#111111;font-weight:normal;font-style:normal;">Raporty środków trwałych</div>
<svg class="b" style="left:925.7px;top:788.1px" width="14" height="15" viewBox="0 0 14 15"><path d="M1,8.5 C2.5,9.5 3.5,11 4.2,13.4 C6.5,8.5 9.5,4.5 13,1.5 C9.5,4.5 6.8,8 4.6,10.5 C4,9.3 2.8,8.3 1,8.5 Z" fill="#000000" stroke="#000000" stroke-width="0.95" stroke-linejoin="round"/></svg>
<svg class="b" style="left:975.7px;top:788.1px" width="14" height="15" viewBox="0 0 14 15"><path d="M1,8.5 C2.5,9.5 3.5,11 4.2,13.4 C6.5,8.5 9.5,4.5 13,1.5 C9.5,4.5 6.8,8 4.6,10.5 C4,9.3 2.8,8.3 1,8.5 Z" fill="#000000" stroke="#000000" stroke-width="0.95" stroke-linejoin="round"/></svg>
<div class="b" style="left:292px;top:795px;width:888px;height:6px;background:#f7f7f7;"></div>
<div class="b" style="left:290.6px;top:436px;width:862.6px;height:31px;border:2px solid #fa0a0a;border-radius:6px;box-shadow:0 0 4px rgba(0,0,0,0.18)"></div>
<div class="b" style="left:1162.5px;top:359.3px;width:17.5px;height:345.2px;background:#bdbdbd;"></div>
<svg class="b" style="left:1162px;top:775px" width="18" height="14" viewBox="1162 775 18 14"><path d="M1165,778.5 L1170.9,785.3 L1176.8,778.5" fill="none" stroke="#c8c8c8" stroke-width="1.8"/></svg>
<div class="t " style="left:1162.5px;top:789.51px;font-size:12.5px;line-height:12.5px;color:#333;font-weight:normal;font-style:normal;letter-spacing:-0.3px;-webkit-text-stroke:0.3px #333;">+/-</div>
<div class="b" style="left:39px;top:590.4px;width:47.2px;height:47.2px;border-radius:50%;background:rgba(222,28,28,0.9);border:1.6px solid #ff0c0c;box-shadow:0 1px 5px rgba(0,0,0,0.3)"></div>
<svg class="b" style="left:39px;top:590.4px" width="50" height="50" viewBox="0 0 50 50"><path d="M19,17.6 L26.7,12.6 L26.7,34.8" fill="none" stroke="#f7e3e3" stroke-width="3" stroke-linejoin="miter"/></svg>
<div class="b" style="left:674.2px;top:381.1px;width:47.2px;height:47.2px;border-radius:50%;background:rgba(222,28,28,0.9);border:1.6px solid #ff0c0c;box-shadow:0 1px 5px rgba(0,0,0,0.3)"></div>
<div class="t" style="left:674.2px;top:381.1px;width:50px;height:50px;font-size:31px;line-height:50px;text-align:center;color:#f7e3e3;-webkit-text-stroke:0.3px #f7e3e3">2</div>
</body></html>
